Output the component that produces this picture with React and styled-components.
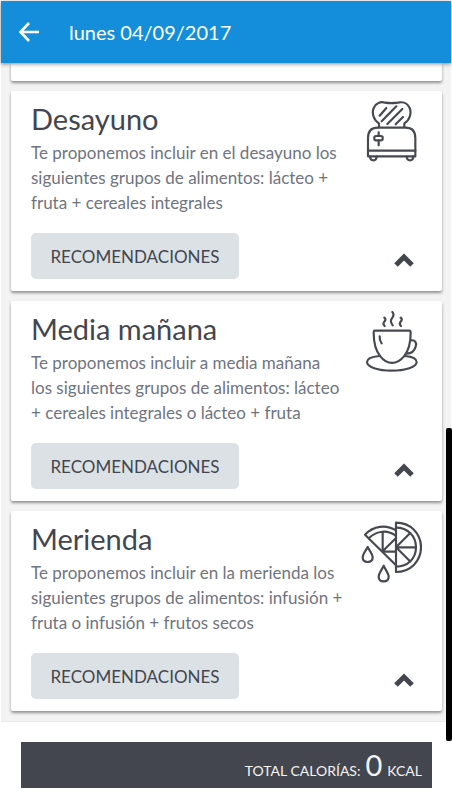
import React from 'react'
import styled, { createGlobalStyle } from 'styled-components'

const GlobalStyle = createGlobalStyle`
* {
    box-sizing: border-box;
}
body {
    margin: 0;
    background-color: #fff;
    font-family: Lato, "Open Sans", sans-serif;
    color: #43464e;
}
`

const Container = styled.div`
min-height: 100vh;
display: flex;
flex-direction: column;
padding: 1px 1px 0;
position: relative;
`

const Header = styled.header`
height: 62px;
display: flex;
align-items: center;
gap: 28px;
padding: 0 16px;
background-color: #148edb;
color: #fff;
box-shadow: 0 1px 4px rgba(0, 0, 0, 0.45);
z-index: 1;
`

const BackButton = styled.button`
display: flex;
padding: 0;
border: none;
background: none;
color: inherit;
`

const Day = styled.h1`
margin: 0;
font-size: 20px;
font-weight: 400;
line-height: 28px;
`

const Meals = styled.main`
flex: 1;
display: flex;
flex-direction: column;
gap: 10px;
padding: 0 9px 9px 10px;
background-color: #f3f3f3;
border-bottom: 1px solid #e9e9e9;
`

const Card = styled.section`
display: flex;
flex-direction: column;
gap: 18px;
min-height: 200px;
padding: 10px 20px 12px;
background-color: #fff;
border-radius: 2px;
box-shadow: 0 2px 3px rgba(0, 0, 0, 0.4);
`

const PreviousCard = styled.div`
height: 18px;
background-color: #fff;
border-radius: 0 0 2px 2px;
box-shadow: 0 2px 3px rgba(0, 0, 0, 0.4);
`

const CardTop = styled.div`
display: flex;
justify-content: space-between;
`

const CardBottom = styled.div`
display: flex;
justify-content: space-between;
align-items: flex-end;
`

const Title = styled.h2`
margin: 0 0 3px;
font-size: 29px;
font-weight: 400;
line-height: 36px;
`

const Desc = styled.p`
margin: 0;
font-size: 17px;
line-height: 25px;
color: #6f7480;
white-space: pre;
`

const Icon = styled.svg`
width: 62px;
height: 62px;
flex: none;
margin-left: -20px;
fill: none;
stroke: #464950;
stroke-width: 6.5;
stroke-linecap: round;
stroke-linejoin: round;
`

const Button = styled.button`
width: 208px;
height: 46px;
padding: 0;
border: none;
border-radius: 5px;
background-color: #dce1e5;
color: #43464e;
font-family: inherit;
font-size: 17px;
`

const Toggle = styled.button`
display: flex;
padding: 8px 8px 12px;
border: none;
background: none;
color: #43464e;
`

const Footer = styled.footer`
padding: 20px 19px 15px 20px;
`

const Total = styled.div`
height: 46px;
display: flex;
justify-content: flex-end;
align-items: baseline;
gap: 5px;
padding: 0 10px;
background-color: #43464e;
color: #f4f4f4;
font-size: 14px;
line-height: 46px;
`

const Amount = styled.span`
font-size: 29px;
`

const ScrollThumb = styled.div`
position: absolute;
right: 0;
top: 428px;
bottom: 62px;
width: 6px;
border-radius: 2px;
background-color: #000;
z-index: 2;
`

const Toaster = () => (
    <Icon viewBox="30 33 186 186" aria-hidden="true">
        <path d="M87 111V100C70 90 65 69 71 54C77 39 92 34 105 38Q124 41 143 38C158 34 173 39 179 54C185 69 180 90 163 100V111" />
        <path d="M54 199V144Q54 113 84 113H166Q196 113 196 144V199Z" />
        <path d="M54 182H196" />
        <path d="M60 200Q61 211 70 211Q79 211 80 200M170 200Q171 211 180 211Q189 211 190 200" />
        <path d="M89 77L109 54M95 94L139 49M112 102L157 57M137 103L159 81" />
        <rect x="73" y="138" width="25" height="13" rx="5" />
        <path d="M86 127V137M86 152V166" />
    </Icon>
)

const Cup = () => (
    <Icon viewBox="30 33 186 186" aria-hidden="true">
        <path d="M75 92H177Q182 92 182 99C182 128 177 151 162 169C141 195 111 195 91 169C76 151 71 128 71 99Q71 92 75 92Z" />
        <path d="M183 121C195 119 201 128 197 140C193 154 182 161 170 161" />
        <path d="M88 168C65 170 51 177 51 186C51 201 84 212 125 212C166 212 200 201 200 186C200 177 187 170 165 168" />
        <path d="M89 109Q88 121 95 130" />
        <path d="M103 53Q109 58 104 64Q97 71 104 78M127 36Q134 44 127 53Q118 63 128 76M152 53Q158 58 153 64Q146 71 153 78" />
    </Icon>
)

const Citrus = () => (
    <Icon viewBox="30 33 186 186" aria-hidden="true">
        <path d="M138 38C181 38 213 70 213 112C213 154 181 186 138 186Z" />
        <path d="M138 53C173 53 198 78 198 112C198 146 173 170 138 170" />
        <path d="M138 112H197M138 112L180 70M138 112L180 154" />
        <path d="M138 166L45 74C71 47 108 43 138 61" />
        <path d="M57 84C81 62 112 58 138 78M98 67V124L138 84M98 125H137" />
        <path d="M53 111C49 120 38 132 38 142C38 151 44 156 53 156C62 156 68 151 68 142C68 132 57 120 53 111Z" />
        <path d="M101 167C97 177 86 190 86 200C86 209 92 214 101 214C110 214 116 209 116 200C116 190 105 177 101 167Z" />
    </Icon>
)

const meals = [
    {
        title: 'Desayuno',
        desc: 'Te proponemos incluir en el desayuno los\nsiguientes grupos de alimentos: lácteo +\nfruta + cereales integrales',
        icon: <Toaster />,
    },
    {
        title: 'Media mañana',
        desc: 'Te proponemos incluir a media mañana\nlos siguientes grupos de alimentos: lácteo\n+ cereales integrales o lácteo + fruta',
        icon: <Cup />,
    },
    {
        title: 'Merienda',
        desc: 'Te proponemos incluir en la merienda los\nsiguientes grupos de alimentos: infusión +\nfruta o infusión + frutos secos',
        icon: <Citrus />,
    },
]

const App = () => {
    return (
        <Container>
            <GlobalStyle />
            <Header>
                <BackButton aria-label="Volver">
                    <svg width="24" height="24" viewBox="0 0 24 24" fill="none" stroke="currentColor" strokeWidth="2.6">
                        <path d="M22 12H4M12 3L3.5 12L12 21" />
                    </svg>
                </BackButton>
                <Day>lunes 04/09/2017</Day>
            </Header>
            <Meals>
                <PreviousCard />
                {meals.map((meal) => (
                    <Card key={meal.title}>
                        <CardTop>
                            <div>
                                <Title>{meal.title}</Title>
                                <Desc>{meal.desc}</Desc>
                            </div>
                            {meal.icon}
                        </CardTop>
                        <CardBottom>
                            <Button>RECOMENDACIONES</Button>
                            <Toggle aria-label={'Plegar ' + meal.title}>
                                <svg width="20" height="14" viewBox="0 0 20 14" fill="none" stroke="currentColor" strokeWidth="5">
                                    <path d="M2 12L10 4L18 12" />
                                </svg>
                            </Toggle>
                        </CardBottom>
                    </Card>
                ))}
            </Meals>
            <Footer>
                <Total>
                    <span>TOTAL CALORÍAS:</span>
                    <Amount>0</Amount>
                    <span>KCAL</span>
                </Total>
            </Footer>
            <ScrollThumb />
        </Container>
    )
}

export default App
